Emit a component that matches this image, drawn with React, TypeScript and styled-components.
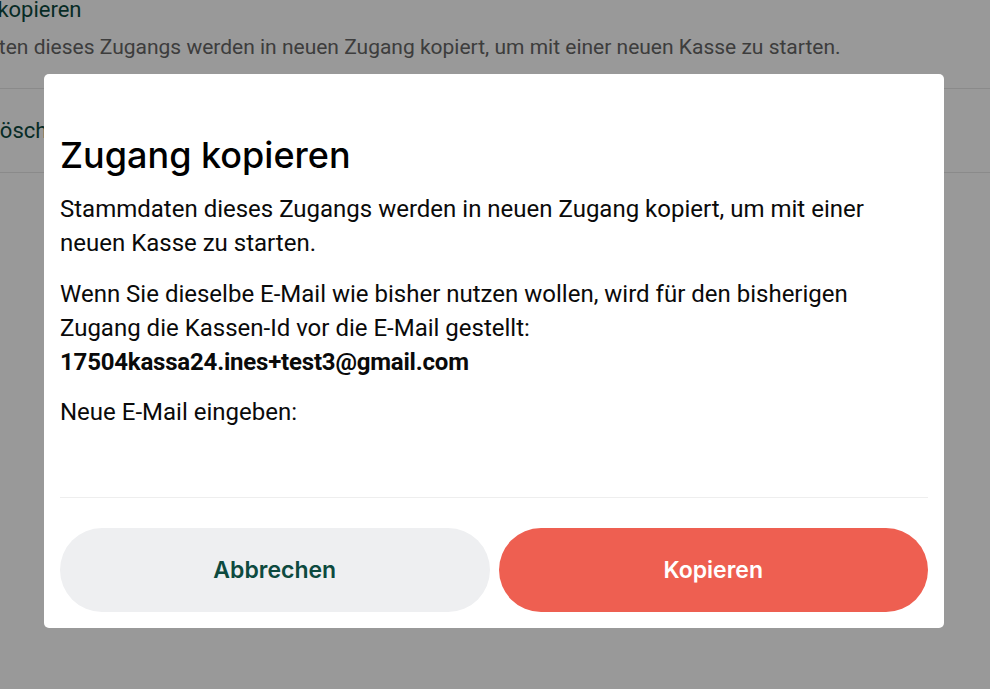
import React from 'react'
import styled, { createGlobalStyle } from 'styled-components'

const Colors = {
    WHITE: '#ffffff',
    GREEN_DARK: '#0d4a3f',
    TEXT: '#0a0a0a',
    MUTED: '#666666',
    LINE: '#e6e6e6',
    GREY_BTN: '#eeeff1',
    CORAL: '#ee5f51',
}

const GlobalStyle = createGlobalStyle`
    html, body {
        margin: 0;
        padding: 0;
        background: ${Colors.WHITE};
        font-family: Roboto, "Liberation Sans", sans-serif;
        overflow: hidden;
    }
`

export default function App() {
    return (
        <React.Fragment>
            <GlobalStyle />
            <Page>
                <PageHead>
                    <Shift offset={-82}>
                        <PageTitle>Zugang kopieren</PageTitle>
                    </Shift>
                    <Shift offset={-92}>
                        <PageText>Stammdaten dieses Zugangs werden in neuen Zugang kopiert, um mit einer neuen Kasse zu starten.</PageText>
                    </Shift>
                </PageHead>
                <PageRow>
                    <Shift offset={-12}>
                        <RowLabel>Löschen</RowLabel>
                    </Shift>
                </PageRow>
            </Page>

            <Overlay>
                <Modal role="dialog" aria-labelledby="copy-title">
                    <Title id="copy-title">Zugang kopieren</Title>
                    <Paragraph>
                        Stammdaten dieses Zugangs werden in neuen Zugang kopiert, um mit einer neuen Kasse zu starten.
                    </Paragraph>
                    <Paragraph>
                        Wenn Sie dieselbe E-Mail wie bisher nutzen wollen, wird für den bisherigen Zugang die Kassen-Id vor die E-Mail gestellt:
                        <br />
                        <strong>17504kassa24.ines+test3@gmail.com</strong>
                    </Paragraph>
                    <Paragraph>Neue E-Mail eingeben:</Paragraph>
                    <Divider />
                    <Actions>
                        <ActionButton type="button">Abbrechen</ActionButton>
                        <ActionButton type="button" primary>Kopieren</ActionButton>
                    </Actions>
                </Modal>
            </Overlay>
        </React.Fragment>
    )
}

const Page = styled.div`
    height: 689px;
    overflow: hidden;
`

const Shift = styled.div<{ offset: number }>`
    margin-left: ${(props) => props.offset}px;
    white-space: nowrap;
`

const PageHead = styled.div`
    padding-bottom: 27px;
    border-bottom: 1px solid ${Colors.LINE};
`

const PageTitle = styled.h2`
    margin: -6px 0 0;
    font-size: 22px;
    font-weight: 400;
    line-height: 32px;
    color: ${Colors.GREEN_DARK};
`

const PageText = styled.p`
    margin: 8px 0 0;
    font-size: 21px;
    line-height: 27px;
    color: ${Colors.MUTED};
`

const PageRow = styled.div`
    height: 83px;
    display: flex;
    align-items: center;
    border-bottom: 1px solid ${Colors.LINE};
`

const RowLabel = styled.span`
    font-size: 22px;
    color: ${Colors.GREEN_DARK};
`

const Overlay = styled.div`
    position: fixed;
    inset: 0;
    background: rgba(0, 0, 0, 0.4);
    display: flex;
    justify-content: center;
    align-items: flex-start;
    padding-top: 74px;
`

const Modal = styled.div`
    width: 900px;
    box-sizing: border-box;
    margin-left: -2px;
    background: ${Colors.WHITE};
    border-radius: 5px;
    padding: 59px 16px 16px;
`

const Title = styled.h1`
    margin: 0 0 15px;
    font-family: Inter, "Noto Sans", sans-serif;
    font-size: 36px;
    font-weight: 500;
    line-height: 44px;
    color: #000;
`

const Paragraph = styled.p`
    margin: 0 0 17px;
    font-size: 24px;
    line-height: 34px;
    color: ${Colors.TEXT};

    & + & {
        margin-bottom: 16px;
    }

    strong {
        font-weight: 700;
        letter-spacing: -0.2px;
    }
`

const Divider = styled.hr`
    margin: 68px 0 30px;
    border: 0;
    border-top: 1px solid #eeeeee;
`

const Actions = styled.div`
    display: grid;
    grid-template-columns: 1fr 1fr;
    gap: 9px;
`

const ActionButton = styled.button<{ primary?: boolean }>`
    height: 84px;
    border: 0;
    border-radius: 42px;
    background: ${(props) => props.primary ? Colors.CORAL : Colors.GREY_BTN};
    color: ${(props) => props.primary ? Colors.WHITE : Colors.GREEN_DARK};
    font-family: Inter, "Noto Sans", sans-serif;
    font-size: 23px;
    font-weight: 600;
    cursor: pointer;
`
